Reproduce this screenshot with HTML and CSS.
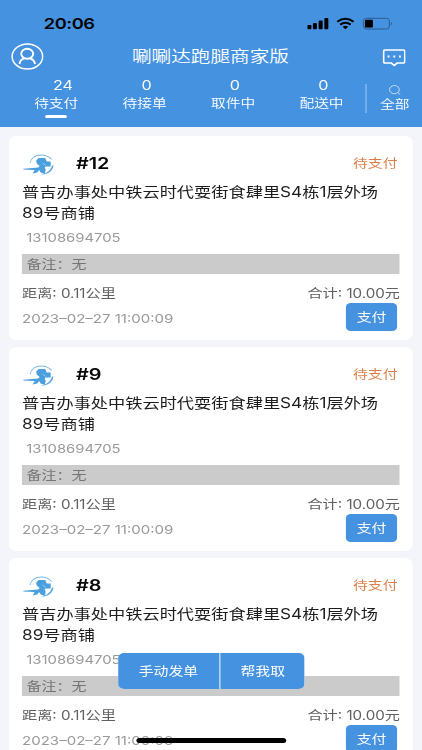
FILE: index.html
```html
<!DOCTYPE html>
<html lang="zh-CN">
<head>
<meta charset="utf-8">
<title>唰唰达跑腿商家版</title>
<link rel="stylesheet" href="styles.css">
</head>
<body>
<svg class="defs" width="0" height="0">
  <symbol id="logo" viewBox="0 0 31 22" preserveAspectRatio="none">
    <path d="M7 9C8 3.500 13 1 18 1C22.500 1 26 2.500 28.500 5.500" fill="none" stroke="#75b4e6" stroke-width="1"/>
    <path d="M30.500 11.500C29.500 17.500 24 21 17.500 20.700C23.500 19.600 27.500 16.500 28.800 11.500Z" fill="#5aa8e3"/>
    <path d="M0 14.700L9 14L15 13.400L16.500 12L13.500 9.500L13 6.500L15.500 4H22L23.500 7.500H27.500V12.500H23L21.500 13L22.500 16L21.500 20L17.500 18.500L16 16L14 18.500L9.500 19.500L11.500 16L0 15.500Z" fill="#4b9fdf"/>
    <path d="M19.500 9L22.500 11.500" stroke="#a9d0ef" stroke-width=".8"/>
  </symbol>
</svg>
<div class="app">
  <header class="header">
    <div class="status">
      <span class="time">20:06</span>
      <svg class="signals" width="86" height="14" viewBox="0 0 86 14" preserveAspectRatio="none">
        <g>
          <rect x=".5" y="8" width="4" height="4.200" rx="1"/><rect x="6" y="6" width="4" height="6.200" rx="1"/>
          <rect x="11.700" y="3.500" width="4" height="8.700" rx="1"/><rect x="17.400" y="1" width="4" height="11.200" rx="1"/>
        </g>
        <g fill="none" stroke="#000" stroke-width="2">
          <path d="M30.300 4.700Q38.500-1.300 46.700 4.700"/><path d="M33.200 7.600Q38.500 4 43.800 7.600"/>
        </g>
        <path d="M35.700 9.700Q38.500 8 41.300 9.700L38.500 12.300Z"/>
        <rect x="56.500" y="1.300" width="26" height="10.700" rx="3" fill="none" stroke="#2c5b8d"/>
        <rect x="58" y="2.800" width="8" height="7.800" rx="1.200"/>
        <path d="M84 4.800Q86 6.600 84 8.500Z" fill="#2c5b8d"/>
      </svg>
    </div>
    <div class="titlebar">
      <svg class="user" width="33" height="27" viewBox="0 0 33 27" preserveAspectRatio="none" fill="none" stroke="#fff">
        <ellipse cx="16.500" cy="13.500" rx="15.300" ry="12.600" stroke-width="1.500"/>
        <ellipse cx="16.300" cy="10.700" rx="6" ry="5" stroke-width="1.900"/>
        <path d="M8.500 21C9 17.500 11.500 15.800 14 15.200M18.600 15.200C21.300 15.800 23.600 17.500 24.200 21" stroke-width="1.900"/>
      </svg>
      <h1 class="title">唰唰达跑腿商家版</h1>
      <svg class="chat" width="24" height="18" viewBox="0 0 24 18" preserveAspectRatio="none" fill="none" stroke="#fff" stroke-width="1.700">
        <path d="M2.500 1H21.500Q22.800 1 22.800 2.300V12.700Q22.800 14 21.500 14H15L12 16.500L9 14H2.500Q1.200 14 1.200 12.700V2.300Q1.200 1 2.500 1Z"/>
        <path d="M5.300 7.600H7.200M11.100 7.600H13M16.900 7.600H18.800" stroke-width="2"/>
      </svg>
    </div>
    <nav class="tabs">
      <div class="tab active"><span class="count">24</span><span class="label">待支付</span></div>
      <div class="tab"><span class="count">0</span><span class="label">待接单</span></div>
      <div class="tab"><span class="count">0</span><span class="label">取件中</span></div>
      <div class="tab"><span class="count">0</span><span class="label">配送中</span></div>
      <div class="all">
        <svg class="search" width="13" height="10" viewBox="0 0 13 10" preserveAspectRatio="none" fill="none" stroke="#c7def6">
          <ellipse cx="6" cy="4.600" rx="4.900" ry="4.100"/><path d="M9.500 7.500L12 9.600"/>
        </svg>
        <span class="label">全部</span>
      </div>
    </nav>
  </header>
  <main class="list">
    <article class="card">
      <div class="head"><svg class="logo"><use href="#logo"/></svg><b class="no">#12</b><span class="state">待支付</span></div>
      <p class="address">普吉办事处中铁云时代耍街食肆里S4栋1层外场<br>89号商铺</p>
      <p class="phone">13108694705</p>
      <p class="remark">备注：无</p>
      <div class="info"><span>距离: 0.11公里</span><span>合计: 10.00元</span></div>
      <div class="foot"><time class="date">2023–02–27 11:00:09</time><button class="pay">支付</button></div>
    </article>
    <article class="card">
      <div class="head"><svg class="logo"><use href="#logo"/></svg><b class="no">#9</b><span class="state">待支付</span></div>
      <p class="address">普吉办事处中铁云时代耍街食肆里S4栋1层外场<br>89号商铺</p>
      <p class="phone">13108694705</p>
      <p class="remark">备注：无</p>
      <div class="info"><span>距离: 0.11公里</span><span>合计: 10.00元</span></div>
      <div class="foot"><time class="date">2023–02–27 11:00:09</time><button class="pay">支付</button></div>
    </article>
    <article class="card">
      <div class="head"><svg class="logo"><use href="#logo"/></svg><b class="no">#8</b><span class="state">待支付</span></div>
      <p class="address">普吉办事处中铁云时代耍街食肆里S4栋1层外场<br>89号商铺</p>
      <p class="phone">13108694705</p>
      <p class="remark">备注：无</p>
      <div class="info"><span>距离: 0.11公里</span><span>合计: 10.00元</span></div>
      <div class="foot"><time class="date">2023–02–27 11:00:08</time><button class="pay">支付</button></div>
    </article>
  </main>
  <div class="actions"><button>手动发单</button><button>帮我取</button></div>
  <div class="home"></div>
</div>
</body>
</html>
```
FILE: styles.css
```css
* { box-sizing: border-box; margin: 0; padding: 0; }
html, body { width: 422px; height: 750px; overflow: hidden; background: #f3f5fb; }
.defs { display: block; }
button { border: 0; background: #4592e1; color: #fff; font: inherit; }

/* The interface is laid out narrow and widened horizontally. */
.app {
  --sx: 1.218;
  position: relative;
  width: 347px;
  height: 750px;
  overflow: hidden;
  transform: scaleX(var(--sx));
  transform-origin: 0 0;
  font-family: Inter, "Noto Sans CJK SC", sans-serif;
  font-weight: 400;
  color: #222;
}
.app svg { flex: none; }

.header { height: 127px; background: #4592e1; color: #fff; }
.status { height: 43px; display: flex; justify-content: space-between; padding: 14px 24.100px 0 36px; }
.time { font-size: 15px; line-height: 19px; font-weight: 600; color: #000; letter-spacing: -.4px; }
.signals { width: 70.600px; height: 14px; margin-top: 3px; }
.titlebar { height: 27px; display: flex; align-items: center; padding: 0 13.600px 0 9.400px; }
.user { width: 27px; height: 27px; }
.title { font-size: 16.100px; font-weight: 350; line-height: 27px; margin-left: 72px; }
.chat { width: 19.300px; height: 18px; margin: 2px 0 0 auto; }
.tabs { height: 57px; display: flex; padding: 5px 0 0 9.900px; }
.tab { position: relative; width: 72.600px; display: flex; flex-direction: column; align-items: center; }
.count { font-size: 13.300px; line-height: 21px; height: 20px; padding-left: 3px; }
.active .count { padding-left: 11px; }
.label { font-size: 12.100px; line-height: 17px; font-weight: 350; }
.active::after { content: ""; width: 18px; height: 2.500px; margin-top: 3px; border-radius: 2px; background: #fff; }
.all { flex: 1; height: 29px; margin-top: 9px; border-left: 1px solid #8fc0f0; display: flex; flex-direction: column; align-items: center; }
.search { width: 10.500px; height: 10px; margin-top: 1px; margin-bottom: .5px; }

.list { display: grid; grid-template-columns: 331.700px; gap: 7px; padding: 9px 7.400px; }
.card { height: 204px; padding: 15px 10.700px 0; border-radius: 7px; background: #fff; }
.head { height: 31px; display: flex; align-items: center; padding-bottom: 7px; }
.logo { width: 25.500px; height: 22px; margin: 4px 0 0 .800px; }
.no { margin-left: 18px; font-size: 16.300px; font-weight: 600; color: #080808; }
.state { margin-left: auto; margin-right: 2px; font-size: 12.200px; color: #dc8049; }
.address { height: 42px; font-size: 14.130px; line-height: 20.500px; color: #1d1d1d; white-space: nowrap; }
.phone { height: 29.500px; padding-left: 3.500px; font-size: 12.200px; line-height: 27px; color: #9a9a9a; }
.remark { height: 20.500px; padding-left: 3.700px; background: #cbcbcb; font-size: 12.350px; line-height: 21px; color: #747474; }
.info { height: 29px; display: flex; justify-content: space-between; font-size: 12.450px; line-height: 39px; color: #606060; }
.foot { height: 28px; display: flex; justify-content: space-between; padding-right: 2.400px; }
.date { font-size: 12.350px; line-height: 32px; color: #9a9a9a; }
.pay { width: 41.800px; height: 28px; border-radius: 4px; font-size: 12.200px; }

.actions { position: absolute; left: 96.500px; top: 653px; display: flex; gap: 1px; width: 153.900px; height: 36px; border-radius: 5px; overflow: hidden; background: #d9e9f9; }
.actions button { flex: 1; font-size: 12.200px; }
.actions button:first-child { flex: 0 0 83.500px; }
.home { position: absolute; left: 111.700px; top: 738px; width: 123.200px; height: 5px; border-radius: 3px; background: #000; }
```
